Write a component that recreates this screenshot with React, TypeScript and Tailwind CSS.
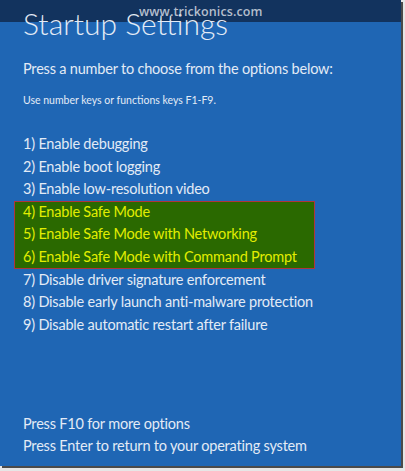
export default function App() {
  const items = [
    "1) Enable debugging",
    "2) Enable boot logging",
    "3) Enable low-resolution video",
  ];
  const safe = [
    "4) Enable Safe Mode",
    "5) Enable Safe Mode with Networking",
    "6) Enable Safe Mode with Command Prompt",
  ];
  const rest = [
    "7) Disable driver signature enforcement",
    "8) Disable early launch anti-malware protection",
    "9) Disable automatic restart after failure",
  ];
  return (
    <div className="w-[405px] h-[471px] bg-[#e6e6e6] overflow-hidden" style={{ fontFamily: 'Lato, "Open Sans", sans-serif' }}>
      <div className="relative w-[401px] h-[466px] flex flex-col bg-[linear-gradient(to_bottom,#12335e_22px,#1f66b4_22px)] shadow-[2px_2px_0_#4a4a4a] text-[#e3ebf6] pl-[23px] whitespace-nowrap">
        <div className="absolute left-[139px] top-[3px] text-[12.5px] leading-[18px] font-semibold text-[#d3d9e1]/85 tracking-[0.1px]" style={{ fontFamily: '"Open Sans", sans-serif' }}>www.trickonics.com</div>
        <div className="pt-[5px] text-[30px] leading-[36px] font-light">Startup Settings</div>
        <div className="mt-[17px] text-[14.5px] leading-[22px] tracking-[-0.2px]">Press a number to choose from the options below:</div>
        <div className="mt-[12px] text-[10.5px] leading-[16px]">Use number keys or functions keys F1-F9.</div>
        <div className="mt-[25px] flex flex-col text-[14.5px] leading-[22.6px] tracking-[-0.2px]">
          {items.map((t) => (
            <div key={t}>{t}</div>
          ))}
          <div className="-ml-[9px] pl-[9px] w-[301px] bg-[#2a6900] text-[#e2ee00] shadow-[inset_0_0_0_1px_#b0343c]">
            {safe.map((t) => (
              <div key={t}>{t}</div>
            ))}
          </div>
          {rest.map((t) => (
            <div key={t}>{t}</div>
          ))}
        </div>
        <div className="mt-auto pb-[9px] flex flex-col text-[14.5px] leading-[22px] tracking-[-0.2px]">
          <div>Press F10 for more options</div>
          <div>Press Enter to return to your operating system</div>
        </div>
      </div>
    </div>
  );
}
